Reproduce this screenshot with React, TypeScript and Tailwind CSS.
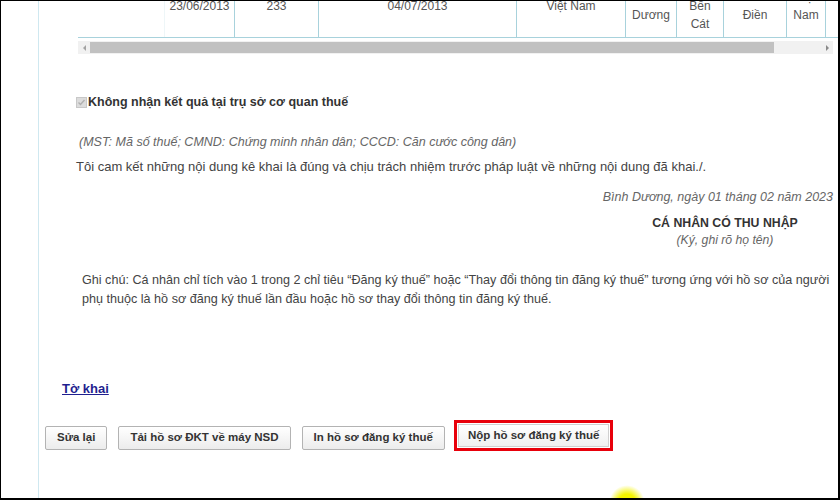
export default function App() {
  const vline = "border-l border-[#a8d2dc]";
  const btn = "h-[24px] px-[11px] border border-[#b3b3b3] rounded-[2px] bg-gradient-to-b from-white to-[#ececec]";
  return (
    <div className="w-[840px] h-[500px] relative overflow-hidden bg-white border-t border-l border-r-2 border-b-2 border-black font-['Liberation_Sans',Arial,sans-serif] text-[13px] text-[#444]">
      <div className="ml-[37px] h-full border-l border-[#cfe8f0] flex flex-col">
        {/* table (clipped) */}
        <div className="ml-[39px] w-[760px] h-[37px] overflow-hidden border-b border-[#a8d2dc]">
          <div className="flex h-[62px] mt-[-26px] text-[#555] text-[12px] leading-[18px]">
            <div className="w-[86px] shrink-0" />
            <div className="w-[70px] shrink-0 border-l border-[#eef6f8] flex items-center justify-center">23/06/2013</div>
            <div className={`w-[84px] shrink-0 ${vline} flex items-center justify-center`}>233</div>
            <div className={`w-[198px] shrink-0 ${vline} flex items-center justify-center`}>04/07/2013</div>
            <div className={`w-[109px] shrink-0 ${vline} flex items-center justify-center`}>Việt Nam</div>
            <div className={`w-[51px] shrink-0 ${vline} flex items-center justify-center text-center`}>Bình<br />Dương</div>
            <div className={`w-[47px] shrink-0 ${vline} flex items-center justify-center text-center`}>Thị xã<br />Bến<br />Cát</div>
            <div className={`w-[63px] shrink-0 ${vline} flex items-center justify-center text-center`}>Phú An<br />Điền</div>
            <div className={`w-[39px] shrink-0 ${vline} flex items-center justify-center text-center`}>Việt<br />Nam</div>
            <div className={`w-[20px] shrink-0 ${vline}`} />
          </div>
        </div>
        {/* scrollbar */}
        <div className="ml-[39px] mt-[3px] w-[755px] h-[13px] bg-[#f1f1f1] flex items-center">
          <div className="w-[12px] h-full flex items-center justify-center">
            <div className="w-0 h-0 border-y-[3px] border-y-transparent border-r-[3px] border-r-[#a3a3a3]" />
          </div>
          <div className="w-[684px] h-[11px] bg-[#c1c1c1]" />
          <div className="flex-1" />
          <div className="w-[12px] h-full flex items-center justify-center">
            <div className="w-0 h-0 border-y-[3px] border-y-transparent border-l-[3px] border-l-[#8a8a8a]" />
          </div>
        </div>

        {/* checkbox */}
        <div className="mt-[42px] ml-[37px] flex items-center h-[13px]">
          <div className="w-[11px] h-[11px] bg-[#dcdcdc] border border-[#c8c8c8] flex items-center justify-center">
            <svg width="9" height="9" viewBox="0 0 9 9"><path d="M1.5 4.5 L3.5 6.5 L7.5 2" stroke="#b0b0b0" strokeWidth="1.4" fill="none" /></svg>
          </div>
          <span className="ml-[1px] font-bold text-[12.5px] text-[#333]">Không nhận kết quả tại trụ sở cơ quan thuế</span>
        </div>

        <div className="mt-[24px] ml-[40px] leading-[18px] text-[12.5px] italic text-[#666]">
          (MST: Mã số thuế; CMND: Chứng minh nhân dân; CCCD: Căn cước công dân)
        </div>
        <div className="mt-[7px] ml-[37px] leading-[18px] text-[#444]">
          Tôi cam kết những nội dung kê khai là đúng và chịu trách nhiệm trước pháp luật về những nội dung đã khai./.
        </div>
        <div className="mt-[12px] pr-[5px] leading-[18px] text-[12.5px] italic text-[#666] text-right">
          Bình Dương, ngày 01 tháng 02 năm 2023
        </div>
        <div className="mt-[9px] self-end w-[226px] text-center leading-[17px]">
          <div className="font-bold text-[12.3px] text-[#333]">CÁ NHÂN CÓ THU NHẬP</div>
          <div className="italic text-[12.2px] text-[#666]">(Ký, ghi rõ họ tên)</div>
        </div>

        <div className="mt-[22px] ml-[43px] leading-[19px] text-[12.6px] text-[#444] whitespace-nowrap">
          Ghi chú: Cá nhân chỉ tích vào 1 trong 2 chỉ tiêu “Đăng ký thuế” hoặc “Thay đổi thông tin đăng ký thuế” tương ứng với hồ sơ của người
          <br />
          phụ thuộc là hồ sơ đăng ký thuế lần đầu hoặc hồ sơ thay đổi thông tin đăng ký thuế.
        </div>

        <div className="mt-[72px] ml-[23px] leading-[16px]">
          <a className="font-bold underline text-[#1f1f8f]">Tờ khai</a>
        </div>

        <div className="mt-[23px] ml-[6px] flex items-start text-[11.5px] font-bold text-[#333]">
          <button className={`mt-[6px] ${btn}`}>Sửa lại</button>
          <button className={`mt-[6px] ml-[11px] ${btn}`}>Tải hồ sơ ĐKT về máy NSD</button>
          <button className={`mt-[6px] ml-[11px] ${btn}`}>In hồ sơ đăng ký thuế</button>
          <div className="ml-[9px] border-[3px] border-[#e8000b] p-[1px]">
            <button className="h-[23px] px-[9px] border border-[#d0d0d0] bg-gradient-to-b from-white to-[#f0f0f0]">Nộp hồ sơ đăng ký thuế</button>
          </div>
        </div>
      </div>
      <div className="absolute left-[608px] top-[484px] w-[36px] h-[36px] rounded-full bg-[radial-gradient(circle,#f4f400_35%,#ffff0000_70%)]" />
    </div>
  );
}
